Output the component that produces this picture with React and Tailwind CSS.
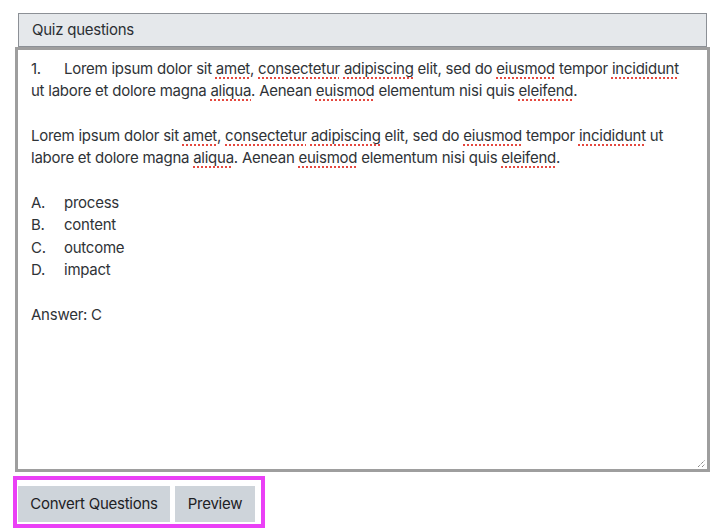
import React from "react";

const font = { fontFamily: "Inter, 'Liberation Sans', sans-serif" };

const misspelled = new Set(["amet", "consectetur", "adipiscing", "eiusmod", "incididunt", "aliqua", "euismod", "eleifend"]);

const Marked = ({ text }) => {
  const parts = text.split(/(\s+|[.,])/);
  return parts.map((part, i) =>
    misspelled.has(part) ? (
      <span
        key={i}
        className="underline decoration-dotted decoration-[#e5483f] decoration-2 underline-offset-[3px]"
      >
        {part}
      </span>
    ) : (
      <React.Fragment key={i}>{part}</React.Fragment>
    )
  );
};

const Line = ({ label, children }) => (
  <div className="whitespace-nowrap h-[22.35px]">
    {label ? <span className="inline-block w-[33px]">{label}</span> : null}
    <Marked text={children} />
  </div>
);

const Blank = () => <div className="h-[22.35px]" />;

const options = [
  ["A.", "process"],
  ["B.", "content"],
  ["C.", "outcome"],
  ["D.", "impact"],
];

const App = () => {
  return (
    <div style={font} className="w-[726px] h-[531px] bg-white pt-[13px] pl-[15px] text-[15px] leading-[22.35px] tracking-[-0.25px] text-[#2f3337]">
      <div className="w-[695px]">
        <div className="mx-[3px] h-[34px] flex items-center border border-[#8c9096] bg-[#e5e8eb] pl-[13px] pt-[1px] text-[#2b2f33]">
          Quiz questions
        </div>
        <div className="relative h-[425px] border-[3px] border-[#9e9e9e] bg-white pl-[13px] pt-[8px]">
          <Line label="1.">Lorem ipsum dolor sit amet, consectetur adipiscing elit, sed do eiusmod tempor incididunt</Line>
          <Line>ut labore et dolore magna aliqua. Aenean euismod elementum nisi quis eleifend.</Line>
          <Blank />
          <Line>Lorem ipsum dolor sit amet, consectetur adipiscing elit, sed do eiusmod tempor incididunt ut</Line>
          <Line>labore et dolore magna aliqua. Aenean euismod elementum nisi quis eleifend.</Line>
          <Blank />
          {options.map(([label, text]) => (
            <Line key={label} label={label}>{text}</Line>
          ))}
          <Blank />
          <Line>Answer: C</Line>
          <svg className="absolute right-[1px] bottom-[1px]" width="9" height="9" viewBox="0 0 9 9">
            <path d="M1 8 L8 1 M5 8 L8 5" stroke="#555" strokeWidth="1" strokeDasharray="1 1" fill="none" />
          </svg>
        </div>
      </div>
      <div className="-ml-[2px] mt-[4px] w-fit flex gap-[5px] border-4 border-[#ea40f6] pl-[1px] pt-[6px] pr-[6px] pb-[2px]">
        <button type="button" className="w-[152px] h-[36px] bg-[#ced4da] text-[#1d2125]">
          Convert Questions
        </button>
        <button type="button" className="w-[80px] h-[36px] bg-[#ced4da] text-[#1d2125]">
          Preview
        </button>
      </div>
    </div>
  );
};

export default App;
